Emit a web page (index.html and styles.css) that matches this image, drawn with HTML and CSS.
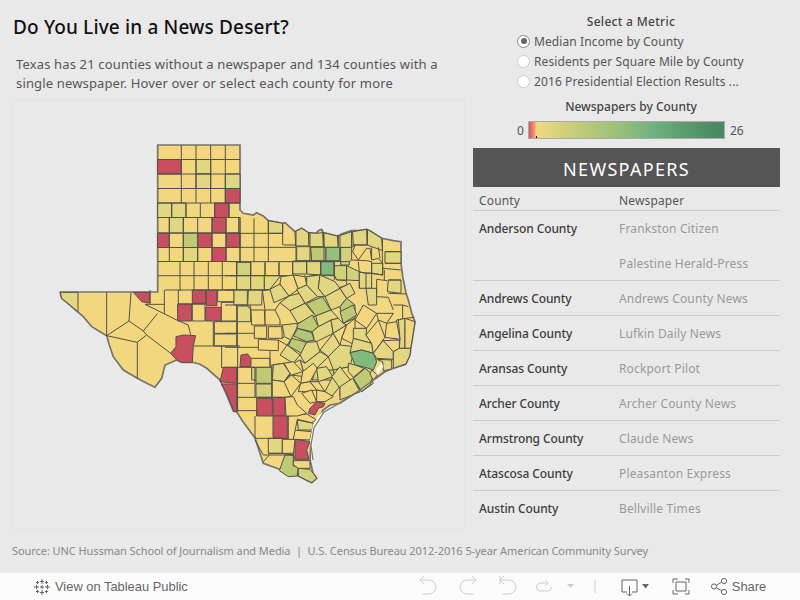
FILE: index.html
```html
<!DOCTYPE html>
<html lang="en">
<head>
    <meta charset="UTF-8">
    <meta name="viewport" content="width=device-width, initial-scale=1.0">
    <title>Do You Live in a News Desert?</title>
    <link rel="stylesheet" href="styles.css">
</head>
<body>
    <div class="dashboard">
        <div class="left">
            <h1>Do You Live in a News Desert?</h1>
            <p class="intro">Texas has 21 counties without a newspaper and 134 counties with a single newspaper. Hover over or select each county for more</p>
            <div class="map-box">
                <svg class="map" viewBox="13 100 451 429">
                    <!-- state shape, page coordinates -->
                    <path class="state" d="M157.7 145H240V210L243.3 213.3 253.3 215 256.7 212.7 263.3 216 268.3 220.7 282.7 223.3 285 222.7 295 231.7 301.7 228.3 308.3 232.7 316 233.3 318.3 230.7 321.7 229.3 323.3 232.7 337.3 236 343.3 233.3 351.7 230.7 358.3 230.7 366.7 229.3 370 230.7 381.7 238.3 393.3 240.7 401 241.7V263L402.7 276.7 406 293 408.3 300 411.7 313 415 321.7 412.7 336.7 410.7 348.3 410 355 405.7 364.3 393.3 368.3 385 371.7 373.3 380 360 390 340 403.3 330 405 323 410 315 425 311 440 310 460 313 473 316.7 478.3 311.7 482.7 298.3 476 281.7 470 263.3 463.3 255 438 243 421.7 236.7 411.7 233.3 411 226.7 395 220 380 206.7 368.3 200 364.3 192.7 362.3 181.7 362.3 176.7 360 165 365 161.7 378.3 155 387.3 146.7 383.3 137.3 378.3 123.3 370 113.3 356.7 109.3 345 106.7 335.7 100 331.7 91.7 326.7 83.3 316.7 77.3 311.7 70 305 61.7 298.3 60.3 293.3V292H157.7Z"/>

                    <!-- panhandle grid -->
                    <g>
                        <rect class="r" x="157.7" y="159.5" width="23.6" height="14.5"/>
                        <rect class="a" x="196" y="159.5" width="14.7" height="14.5"/>
                        <rect class="a" x="196" y="174" width="14.7" height="14.5"/>
                        <rect class="a" x="225.3" y="174" width="14.7" height="14.5"/>
                        <rect class="r" x="225.3" y="188.5" width="14.7" height="14.5"/>
                        <rect class="a" x="157.7" y="203" width="14" height="14.5"/>
                        <rect class="a" x="171.7" y="203" width="14.3" height="14.5"/>
                        <rect class="r" x="214.7" y="203" width="14.3" height="14.5"/>
                        <rect class="a" x="169.3" y="217.5" width="14" height="15.5"/>
                        <rect class="r" x="212" y="217.5" width="14" height="15.5"/>
                        <rect class="r" x="157.7" y="233" width="11.6" height="14.5"/>
                        <rect class="c" x="183.3" y="233" width="14.4" height="14.5"/>
                        <rect class="r" x="197.7" y="233" width="14.3" height="14.5"/>
                        <rect class="r" x="226" y="233" width="14" height="14.5"/>
                        <rect class="a" x="183.3" y="247.5" width="14.4" height="14"/>
                        <rect class="r" x="212" y="247.5" width="14" height="14"/>
                        <path class="ln" d="M157.7 159.5H240M157.7 174H240M157.7 188.5H240M157.7 203H240M157.7 217.5H240M157.7 233H240M157.7 247.5H240M157.7 261.5H240M157.7 275.7H240M181.3 145V203M196 145V203M210.7 145V203M225.3 145V203M171.7 203V217.5M186 203V217.5M200.3 203V217.5M214.7 203V217.5M229 203V217.5M169.3 217.5V261.5M183.3 217.5V261.5M197.7 217.5V261.5M212 217.5V261.5M226 217.5V261.5M238.7 217.5V233M180 261.5V291M194 261.5V291M208.3 261.5V291M222.3 261.5V291M236.5 261.5V291M240 217V262"/>
                    </g>

                    <!-- west Texas, 3x crop from (50,285) -->
                    <g transform="translate(50 285) scale(.3333)">
                        <polygon class="a" points="31,22 84,22 84,80 60,60 35,40"/>
                        <polygon class="r" points="250,22 300,22 300,55 275,50"/>
                        <polygon class="r" points="383,57 425,57 425,108 383,108"/>
                        <polygon class="r" points="427,15 467,15 467,55 427,55"/>
                        <polygon class="r" points="469,15 501,15 501,62 469,62"/>
                        <polygon class="r" points="467,67 514,67 514,108 467,108"/>
                        <polygon points="427,57 465,57 465,108 427,108"/>
                        <polygon points="503,15 553,15 553,50 503,50"/>
                        <polygon class="a" points="553,15 572,15 572,50 553,50"/>
                        <polygon points="514,52 560,52 560,108 514,108"/>
                        <polygon points="493,110 560,110 560,145 493,145"/>
                        <polygon points="493,147 560,147 560,183 493,183"/>
                        <polygon class="r" points="378,155 400,150 437,152 430,182 427,232 395,232 380,225 362,205 378,185"/>
                        <path class="ln" d="M170 22V152M243 22L237 108 170 152M237 108L280 138 323 85M170 152L262 172 290 150M262 172V280M280 138L290 150 362 205M285 58H345M285 58L340 85 380 105 415 120 422 150M300 15V55M343 15V88M385 15V57M345 15H572M385 57H467M490 110V183M430 183H570M515 183V248M515 248H563M563 183V380M513 300H563"/>
                    </g>

                    <!-- north and north east, 3x crop from (230,210) -->
                    <g transform="translate(230 210) scale(.3333)">
                        <polygon class="a" points="115,32 158,40 158,70 115,70"/>
                        <polygon class="a" points="195,65 215,55 235,68 237,108 197,108"/>
                        <polygon class="a" points="237,68 258,70 278,68 280,110 237,110"/>
                        <polygon class="a" points="280,68 322,78 325,112 282,112"/>
                        <polygon class="a" points="200,110 242,110 245,152 200,152"/>
                        <polygon class="c" points="242,112 288,112 288,152 245,152"/>
                        <polygon class="d" points="288,112 330,112 330,152 288,152"/>
                        <polygon class="e" points="272,155 312,155 312,195 272,195"/>
                        <polygon class="b" points="332,112 365,112 365,150 358,155 358,165 332,165"/>
                        <polygon class="b" points="313,167 350,167 350,210 320,210 313,195"/>
                        <polygon class="b" points="350,167 388,185 388,212 350,210"/>
                        <polygon class="a" points="188,153 230,153 230,192 188,192"/>
                        <polygon class="a" points="230,153 272,153 272,195 230,192"/>
                        <polygon class="b" points="20,157 62,157 62,197 20,197"/>
                        <polygon class="a" points="325,78 365,65 365,112 325,112"/>
                        <polygon class="a" points="368,65 410,58 412,105 370,105"/>
                        <polygon class="a" points="412,58 455,85 458,122 412,105"/>
                        <polygon class="a" points="465,125 513,125 513,160 465,160"/>
                        <polygon class="a" points="230,200 263,195 265,230 230,225"/>
                        <polygon class="a" points="268,197 313,197 320,210 350,212 350,225 310,240 268,225"/>
                        <polygon class="a" points="388,187 425,190 425,235 388,235"/>
                        <polygon class="a" points="425,160 458,160 458,195 425,190"/>
                        <polygon class="a" points="475,210 513,210 513,250 472,245"/>
                        <polygon class="a" points="408,235 440,235 440,285 415,285"/>
                        <polygon class="a" points="500,330 528,325 525,405 495,385"/>
                        <path class="ln" d="M30 25V155M72 25V155M115 30V155M158 40V105M0 70H158M0 112H198M0 155H360M0 197H152M20 155V197M62 155V197M105 155V197M147 155V197M188 155V195M230 155V192M272 155V195M313 155V210M160 105H197M198 65V155M240 68V155M282 70V155M330 78V155M365 62V112M368 105H412M412 58V105M457 85V160M465 125H513M465 160H513M365 112L375 105 368 125 385 150 410 115 420 115 425 150 445 145 458 160M425 112V150M445 112L450 145M365 150L410 152 425 155M385 155L388 185M425 155V190L458 195V160M388 185L408 190 425 190M458 175L513 180M463 180V210M475 210H513M440 208L472 212M440 208V250M408 190V235M388 215V235M440 260L475 262 490 300M475 250L530 252M490 285H518V325M518 285L535 290M528 325L553 322M190 195L225 225M225 195V225"/>
                    </g>

                    <!-- central counties, 3x crop from (225,260) -->
                    <g transform="translate(225 260) scale(.3333)">
                        <polygon class="a" points="35,47 77,47 77,90 35,90"/>
                        <polygon class="a" points="77,47 118,47 118,90 77,90"/>
                        <polygon class="a" points="118,47 167,47 135,88 118,90"/>
                        <polygon class="a" points="27,90 67,90 67,135 27,135"/>
                        <polygon class="a" points="70,90 112,90 110,135 68,135"/>
                        <polygon class="a" points="37,138 77,138 77,185 37,185"/>
                        <polygon class="a" points="135,88 165,72 192,108 147,128"/>
                        <polygon points="165,72 168,50 205,45 220,88 192,108"/>
                        <polygon points="205,45 240,50 245,75 220,88"/>
                        <polygon class="a" points="215,88 245,75 278,110 240,130 222,100"/>
                        <polygon class="a" points="192,108 222,100 240,130 195,152 165,128"/>
                        <polygon class="a" points="245,50 285,45 280,85 300,110 278,110 245,75"/>
                        <polygon class="a" points="285,45 330,65 345,85 300,110 280,85"/>
                        <polygon class="a" points="300,110 345,85 365,115 345,140 318,150"/>
                        <polygon class="a" points="345,85 375,70 390,100 365,115"/>
                        <polygon class="c" points="245,130 292,110 318,150 272,168"/>
                        <polygon class="a" points="195,152 240,130 272,168 218,190"/>
                        <polygon class="c" points="218,192 262,165 280,200 262,215 215,205"/>
                        <polygon class="a" points="172,195 218,190 215,205 197,240 178,230"/>
                        <polygon class="d2" points="205,228 218,205 260,218 268,240 245,245 215,232"/>
                        <polygon class="c" points="200,235 245,247 230,280 190,258"/>
                        <polygon class="a" points="280,200 318,180 325,220 275,245 268,240 262,215"/>
                        <polygon class="a" points="272,168 318,150 340,175 318,180 280,200"/>
                        <polygon class="c" points="345,140 365,115 390,135 390,175 355,190"/>
                        <polygon class="a" points="318,180 340,175 355,190 365,195 325,220"/>
                        <polygon class="a" points="197,240 190,258 225,285 205,310 165,285"/>
                        <polygon class="a" points="245,247 275,245 285,275 240,310 225,285"/>
                        <polygon class="a" points="285,270 325,220 345,255 310,290"/>
                        <polygon points="325,220 365,195 350,235 345,255"/>
                        <polygon class="a" points="310,290 345,255 390,260 375,320 325,330"/>
                        <polygon points="365,195 390,175 390,255 350,235"/>
                        <polygon class="a" points="225,300 240,310 285,275 310,290 270,330 240,350"/>
                        <polygon class="c" points="140,315 175,310 195,345 180,360 142,360"/>
                        <polygon points="175,310 205,310 225,300 240,350 195,345"/>
                        <polygon class="b" points="270,330 325,330 330,360 262,360"/>
                        <polygon points="325,330 375,320 388,360 330,360"/>
                        <polygon class="b" points="80,322 140,322 142,360 80,360"/>
                        <polygon class="r" points="0,322 37,322 37,360 0,360"/>
                        <polygon class="r" points="45,320 48,285 68,282 78,295 78,320"/>
                        <polygon points="120,150 150,150 165,180 165,195 120,195"/>
                        <polygon points="78,150 118,150 120,195 80,195"/>
                        <polygon points="88,198 125,198 125,235 88,235"/>
                        <polygon points="130,200 170,200 172,235 130,235"/>
                        <polygon points="100,238 160,240 160,272 100,270"/>
                        <path class="ln" d="M0 47H190M35 7V47M77 7V47M120 7V47M162 7V47M0 90H135M0 135H65M112 92L135 88M112 90L120 150M65 135L78 150M37 185V262M0 220H88M0 262H100M78 295H135V320M135 272V320M160 240L190 258M172 235L178 230M165 195H172M150 150L165 128M240 350L262 360"/>
                    </g>

                    <!-- south, 3x crop from (210,340) -->
                    <g transform="translate(210 340) scale(.3333)">
                        <polygon class="r" points="40,82 80,82 80,130 30,125"/>
                        <polygon class="r" points="35,132 80,132 80,215 72,215 50,160"/>
                        <polygon class="c" points="138,82 185,82 185,130 138,130"/>
                        <polygon class="b" points="138,132 185,132 185,172 138,172"/>
                        <polygon class="r" points="140,175 187,175 187,228 140,228"/>
                        <polygon class="r" points="189,172 225,172 225,228 189,228"/>
                        <polygon class="r" points="189,228 232,228 232,298 189,292"/>
                        <polygon class="a" points="175,295 217,295 217,340 175,340"/>
                        <polygon class="c" points="225,345 250,345 250,378 265,378 262,408 235,410 208,392"/>
                        <polygon class="b" points="265,385 300,388 310,400 320,415 305,428 265,408"/>
                        <polygon points="250,362 300,362 300,385 265,385 250,375"/>
                        <polygon class="r" points="255,298 300,305 290,330 297,358 255,358"/>
                        <polygon points="217,298 255,298 250,345 217,340"/>
                        <polygon class="a" points="262,240 310,250 308,270 265,270"/>
                        <polygon points="250,270 305,275 300,300 250,298"/>
                        <polygon points="235,228 290,222 320,240 305,248 262,238 250,298 235,298"/>
                        <polygon class="r" points="295,220 300,205 320,185 345,190 340,200 325,205 315,225"/>
                        <polygon class="a" points="190,75 220,70 240,100 222,125 187,120"/>
                        <polygon points="222,125 245,105 272,130 243,170 225,172"/>
                        <polygon points="187,120 222,125 243,170 225,172 187,172"/>
                        <polygon points="240,100 222,70 250,65 278,95 245,105"/>
                        <polygon points="278,95 310,70 322,85 300,125 272,130"/>
                        <polygon points="272,130 300,125 320,150 285,155 265,155"/>
                        <polygon class="a" points="320,85 350,80 368,110 325,125"/>
                        <polygon points="300,125 325,125 345,155 320,150"/>
                        <polygon class="a" points="345,155 368,110 395,125 385,145 365,170"/>
                        <polygon class="a" points="365,110 390,80 425,125 390,145"/>
                        <polygon class="c" points="430,125 470,90 490,130 455,155"/>
                        <polygon class="a" points="390,145 425,125 450,155 410,170 390,170"/>
                        <polygon points="250,170 262,195 290,220 262,228 228,228 225,172"/>
                        <polygon points="275,160 305,150 320,185 300,190"/>
                        <polygon points="320,150 345,155 370,170 345,185 320,185"/>
                        <path class="ln" d="M82 82V215M82 82H135M82 130H135M82 172H225M82 212H140V228M135 82V172M135 295H235M160 345H250L255 358M135 300L160 345M160 365L178 345M175 340H250M135 228V295"/>
                    </g>

                    <!-- south east, 3x crop from (340,300) -->
                    <g transform="translate(340 300) scale(.3333)">
                        <polygon class="c" points="0,35 40,15 50,45 10,70"/>
                        <polygon points="45,60 70,15 110,40 80,85"/>
                        <polygon points="110,40 160,40 140,70 115,60"/>
                        <polygon class="a" points="40,85 80,85 78,105 95,130 40,115"/>
                        <polygon class="a" points="40,115 95,130 100,160 65,150 30,158"/>
                        <polygon class="e" points="30,158 65,150 100,160 110,185 100,210 75,202 45,195"/>
                        <polygon class="c" points="40,235 75,205 100,225 90,255 65,275"/>
                        <polygon class="a" points="25,190 45,195 72,205 40,232 25,215"/>
                        <polygon class="a" points="0,260 38,235 60,275 0,300"/>
                        <polygon points="78,105 115,60 135,112 100,160 95,130"/>
                        <polygon class="a" points="100,160 130,120 160,155 160,178 110,175"/>
                        <polygon class="a" points="175,60 195,55 195,145 178,145 180,118"/>
                        <polygon points="135,112 140,70 170,65 180,118"/>
                        <polygon points="130,122 178,120 178,145 160,155"/>
                        <polygon points="195,55 225,65 218,110 212,145 195,145"/>
                        <polygon class="a" points="160,155 178,145 212,145 210,165 197,193 160,205"/>
                        <polygon class="a" points="110,178 155,180 155,208 130,212 128,185"/>
                        <polygon points="95,210 112,225 100,240 90,222"/>
                    </g>

                    <!-- bays and the barrier island -->
                    <path class="bay" d="M376.7 368L381.7 363 383.3 366.7 376.7 375ZM318 416L322 412 324 416 318 425 314 436 312 460 310 440 313 425Z"/>
                    <path class="island" d="M405 364L385 371 360 390 338 404 324 412 314 428 311 445 313 460"/>
                </svg>
            </div>
        </div>

        <div class="right">
            <div class="metric">
                <div class="metric-title">Select a Metric</div>
                <div class="radio-row"><span class="radio checked"></span>Median Income by County</div>
                <div class="radio-row"><span class="radio"></span>Residents per Square Mile by County</div>
                <div class="radio-row"><span class="radio"></span>2016 Presidential Election Results ...</div>
            </div>
            <div class="legend">
                <div class="legend-title">Newspapers by County</div>
                <div class="legend-row">
                    <span class="legend-min">0</span>
                    <span class="legend-bar"><span class="legend-tick"></span></span>
                    <span class="legend-max">26</span>
                </div>
            </div>
            <div class="table-title">NEWSPAPERS</div>
            <div class="table-head">
                <span class="col-county">County</span>
                <span>Newspaper</span>
            </div>
            <div class="row double">
                <span class="col-county county">Anderson County</span>
                <div class="papers"><span>Frankston Citizen</span><span>Palestine Herald-Press</span></div>
            </div>
            <div class="row">
                <span class="col-county county">Andrews County</span>
                <div class="papers"><span>Andrews County News</span></div>
            </div>
            <div class="row">
                <span class="col-county county">Angelina County</span>
                <div class="papers"><span>Lufkin Daily News</span></div>
            </div>
            <div class="row">
                <span class="col-county county">Aransas County</span>
                <div class="papers"><span>Rockport Pilot</span></div>
            </div>
            <div class="row">
                <span class="col-county county">Archer County</span>
                <div class="papers"><span>Archer County News</span></div>
            </div>
            <div class="row">
                <span class="col-county county">Armstrong County</span>
                <div class="papers"><span>Claude News</span></div>
            </div>
            <div class="row">
                <span class="col-county county">Atascosa County</span>
                <div class="papers"><span>Pleasanton Express</span></div>
            </div>
            <div class="row last">
                <span class="col-county county">Austin County</span>
                <div class="papers"><span>Bellville Times</span></div>
            </div>
        </div>
    </div>

    <div class="source">Source: UNC Hussman School of Journalism and Media &nbsp;|&nbsp; U.S. Census Bureau 2012-2016 5-year American Community Survey</div>

    <div class="toolbar">
        <svg class="logo" viewBox="0 0 18 18">
            <path d="M9 1v5M6.800 3.500h4.400M9 12v5M6.800 14.500h4.400M1 9h5M3.500 6.800v4.400M12 9h5M14.500 6.800v4.400M9 7v4M7 9h4M4.500 3v3M3 4.500h3M13.500 3v3M12 4.500h3M4.500 12v3M3 13.500h3M13.500 12v3M12 13.500h3"/>
        </svg>
        <span class="tool-label">View on Tableau Public</span>
        <svg class="tool-icons" viewBox="0 0 316 27" width="316" height="27">
            <g class="off">
                <path d="M5 8H14A7 7 0 0 1 14 22H7M9 4L5 8 9 12" transform="translate(0 -1)"/>
                <path d="M61 7H52A7 7 0 0 0 52 21H59M57 3L61 7 57 11"/>
                <path d="M85 3V11M85 7H94A7 7 0 0 1 94 21H87M89 3L85 7 89 11"/>
                <path d="M133 10H125.500A4 4 0 0 0 125.500 18H132.500A4 4 0 0 0 136.500 14M130 7L133 10 130 13"/>
                <polygon class="solid-off" points="152,11 159,11 155.500,15"/>
                <path d="M180 7V20"/>
            </g>
            <g class="on">
                <path d="M212 19H207V7H222V19H217M214.500 13V23M212 20.500L214.500 23 217 20.500"/>
                <polygon class="solid" points="227,11 234,11 230.500,15.500"/>
                <path d="M258 10V6H263M270 6H274V10M274 17V21H270M263 21H258V17M261 9H271V18H261Z"/>
                <circle cx="299" cy="13.500" r="2.600"/>
                <circle cx="309" cy="8" r="2.600"/>
                <circle cx="309" cy="19" r="2.600"/>
                <path d="M301.300 12.200L306.700 9.200M301.300 14.800L306.700 17.800"/>
            </g>
        </svg>
        <span class="tool-label">Share</span>
    </div>
</body>
</html>
```

FILE: styles.css
```css
body {
    margin: 0;
    height: 600px;
    overflow: hidden;
    background-color: #e9e9e9;
    color: #333;
    font-family: "Noto Sans", Arial, sans-serif;
    display: flex;
    flex-direction: column;
}

.dashboard {
    display: flex;
    height: 530px;
    padding-left: 12px;
}

.left {
    width: 453px;
    margin-right: 8px;
}

h1 {
    margin: 15px 0 0 1px;
    font-size: 19px;
    line-height: 24px;
    font-weight: 500;
    color: #111;
    letter-spacing: 0.15px;
}

.intro {
    margin: 16px 19px 0 4px;
    height: 39px;
    font-size: 13px;
    line-height: 19px;
    letter-spacing: 0.15px;
    color: #555;
}

.map-box {
    margin-top: 5px;
    height: 429px;
    border: 1px solid #e4e4e4;
}

.map {
    display: block;
    width: 451px;
    height: 429px;
}

.map polygon, .map rect {
    fill: #f3d77e;
    stroke: #50504a;
    stroke-width: 1;
    vector-effect: non-scaling-stroke;
}

.state {
    fill: #f3d77e;
    stroke: #77736a;
    stroke-width: 1.7;
}

.ln {
    fill: none;
    stroke: #50504a;
    stroke-width: 1;
    vector-effect: non-scaling-stroke;
}

.map .r { fill: #c84f5f; }
.map .a { fill: #e3d681; }
.map .b { fill: #d1d17b; }
.map .c { fill: #bdc973; }
.map .d { fill: #95c07a; }
.map .d2 { fill: #b0c575; }
.map .e { fill: #82ba7c; }

.bay {
    fill: #f4f4f4;
}

.island {
    fill: none;
    stroke: #77736a;
    stroke-width: 1.2;
}

.right {
    width: 307px;
}

.metric {
    height: 92px;
    padding-top: 14px;
    box-sizing: border-box;
    font-size: 12px;
    color: #555;
}

.metric-title, .legend-title {
    text-align: center;
    font-size: 12px;
    line-height: 16px;
    font-weight: 500;
    color: #444;
    padding-left: 9px;
}

.metric-title {
    letter-spacing: 0.3px;
}

.radio-row {
    display: flex;
    align-items: center;
    height: 20px;
    padding-left: 44px;
    letter-spacing: 0.1px;
}

.metric-title + .radio-row {
    margin-top: 1px;
}

.radio {
    width: 13px;
    height: 13px;
    margin-right: 4px;
    box-sizing: border-box;
    border: 1px solid #ccc;
    border-radius: 50%;
    background-color: #fff;
    display: flex;
    align-items: center;
    justify-content: center;
}

.radio.checked {
    border-color: #888;
}

.radio.checked::after {
    content: "";
    width: 6px;
    height: 6px;
    border-radius: 50%;
    background-color: #666;
}

.legend {
    height: 56px;
    padding-top: 7px;
    box-sizing: border-box;
}

.legend-row {
    display: flex;
    align-items: center;
    margin-top: 6px;
    font-size: 12px;
    color: #555;
    padding-left: 44px;
}

.legend-min {
    width: 11px;
}

.legend-bar {
    position: relative;
    width: 195px;
    height: 16px;
    border: 1px solid #aaa;
    background: linear-gradient(to right, #d9525e 0%, #ee8e6c 2.500%, #f1d983 4%, #d8d17c 15%, #b8c878 30%, #9cc17a 45%, #74b280 62%, #5a9c6e 80%, #4a8a62 96%);
}

.legend-tick {
    position: absolute;
    left: 7px;
    bottom: 0;
    width: 1px;
    height: 2px;
    background-color: #000;
}

.legend-max {
    margin-left: 5px;
}

.table-title {
    height: 39px;
    line-height: 43px;
    background-color: #555;
    color: #fff;
    text-align: center;
    font-size: 18px;
    letter-spacing: 1.3px;
}

.table-head {
    display: flex;
    align-items: center;
    height: 24px;
    padding-top: 3px;
    box-sizing: border-box;
    border-bottom: 1px solid #ccc;
    font-size: 12px;
    letter-spacing: 0.15px;
    color: #555;
}

.col-county {
    width: 146px;
    padding-left: 6px;
    box-sizing: border-box;
}

.row {
    display: flex;
    height: 35px;
    box-sizing: border-box;
    border-bottom: 1px solid #ccc;
    font-size: 12px;
    letter-spacing: 0.15px;
}

.row.double {
    height: 70px;
}

.row.last {
    border-bottom: none;
}

.county {
    padding-top: 9px;
    font-weight: 500;
    letter-spacing: -0.1px;
    color: #3c3c3c;
}

.papers {
    display: flex;
    flex-direction: column;
    color: #999;
}

.papers span {
    height: 35px;
    padding-top: 9px;
    box-sizing: border-box;
}

.source {
    height: 43px;
    padding: 13px 0 0 12px;
    box-sizing: border-box;
    font-size: 11px;
    color: #888;
    letter-spacing: -0.07px;
}

.toolbar {
    display: flex;
    align-items: center;
    height: 27px;
    background-color: #fbfbfb;
    font-family: "Liberation Sans", Arial, sans-serif;
    white-space: nowrap;
}

.logo {
    flex-shrink: 0;
    width: 18px;
    height: 18px;
    margin-left: 33px;
    margin-right: 4px;
    fill: none;
    stroke: #666;
    stroke-width: 1;
}

.tool-label {
    font-size: 12.900px;
    font-weight: 500;
    color: #666;
}

.tool-icons {
    flex-shrink: 0;
    margin-left: 227px;
    margin-right: 1px;
    fill: none;
}

.off path {
    stroke: #ccc;
    stroke-width: 1;
}

.on path, .on circle {
    stroke: #666;
    stroke-width: 1;
}

.solid-off {
    fill: #ccc;
}

.solid {
    fill: #666;
}
```
